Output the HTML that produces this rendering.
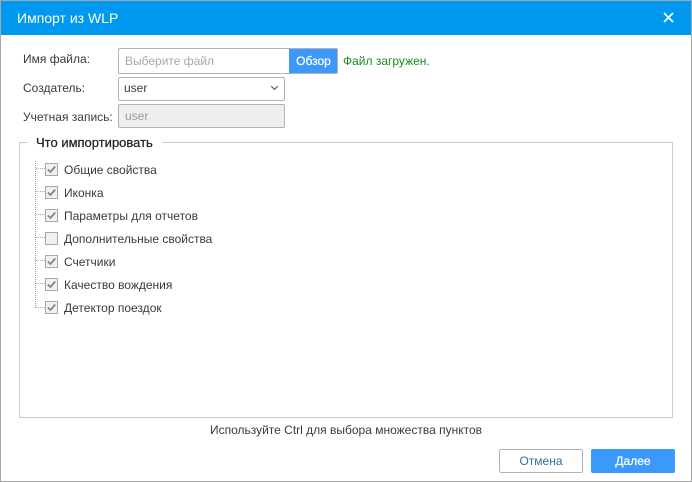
<!DOCTYPE html>
<html><head><meta charset="utf-8">
<style>
html,body{margin:0;padding:0;background:#fff}
body{width:692px;height:482px;position:relative;overflow:hidden;font:12px/14px "Liberation Sans","Noto Sans CJK SC",sans-serif;color:#3a3a3a}
.a{position:absolute;white-space:nowrap}
.box{position:absolute;box-sizing:border-box;border:1px solid #b3b3b3;border-radius:2px;background:#fff}
.cb{position:absolute;left:45px;width:13px;height:13px;box-sizing:border-box;border:1px solid #a8a8a8;background:#f0f0f0}
.cb svg{position:absolute;left:0;top:0}
.lab{left:64px}
.h{position:absolute;left:36px;width:9px;height:0;border-top:1px dotted #aaa}
</style></head>
<body>
<div class="a" style="left:0;top:0;width:692px;height:482px;box-sizing:border-box;border:1px solid #a6a6a6"></div>
<div class="a" style="left:1px;top:1px;width:690px;height:34px;background:#0099ef"></div>
<div class="a" style="left:17px;top:10px;font-size:14px;line-height:17px;color:#fff">Импорт из WLP</div>
<svg class="a" style="left:663px;top:12px" width="11" height="11" viewBox="0 0 11 11"><path d="M1 1L10 10M10 1L1 10" stroke="#fff" stroke-width="1.700" fill="none"/></svg>

<div class="a" style="left:23px;top:52px">Имя файла:</div>
<div class="box" style="left:118px;top:48px;width:172px;height:26px;border-radius:2px 0 0 2px"></div>
<div class="a" style="left:125px;top:54px;color:#a8a8a8">Выберите файл</div>
<div class="a" style="left:289px;top:48px;width:49px;height:26px;box-sizing:border-box;background:#3b99fc;border:1px solid #b3b3b3;border-left:1px solid #3b99fc;border-radius:0 2px 2px 0;color:#fff;text-align:center;line-height:24px;-webkit-text-stroke:.25px #fff">Обзор</div>
<div class="a" style="left:343px;top:54px;color:#1a8a1a">Файл загружен.</div>

<div class="a" style="left:23px;top:81px">Создатель:</div>
<div class="box" style="left:118px;top:77px;width:167px;height:24px"></div>
<div class="a" style="left:124px;top:81px">user</div>
<svg class="a" style="left:270px;top:85px" width="9" height="6" viewBox="0 0 9 6"><path d="M1.200 1.200L4.500 4.300L7.800 1.200" stroke="#666" stroke-width="1.300" fill="none"/></svg>

<div class="a" style="left:23px;top:110px">Учетная запись:</div>
<div class="box" style="left:118px;top:104px;width:167px;height:24px;background:#eee"></div>
<div class="a" style="left:125px;top:109px;color:#999">user</div>

<div class="a" style="left:19px;top:142px;width:654px;height:276px;box-sizing:border-box;border:1px solid #ccc"></div>
<div class="a" style="left:28px;top:135px;padding:0 9px 0 8px;background:#fff;line-height:15px;color:#222;-webkit-text-stroke:.25px #222;font-size:13px">Что импортировать</div>

<div class="a" style="left:35px;top:161px;height:147px;width:0;border-left:1px dotted #999"></div>
<div class="h" style="top:168px"></div><div class="h" style="top:191px"></div><div class="h" style="top:214px"></div><div class="h" style="top:237px"></div><div class="h" style="top:260px"></div><div class="h" style="top:283px"></div><div class="h" style="top:307px"></div>

<div class="cb" style="top:163px"><svg width="11" height="11" viewBox="0 0 11 11"><path d="M1.800 5.500L4.500 8L9.200 2.500" stroke="#858585" stroke-width="1.800" fill="none"/></svg></div>
<div class="a lab" style="top:163px">Общие свойства</div>
<div class="cb" style="top:186px"><svg width="11" height="11" viewBox="0 0 11 11"><path d="M1.800 5.500L4.500 8L9.200 2.500" stroke="#858585" stroke-width="1.800" fill="none"/></svg></div>
<div class="a lab" style="top:186px">Иконка</div>
<div class="cb" style="top:209px"><svg width="11" height="11" viewBox="0 0 11 11"><path d="M1.800 5.500L4.500 8L9.200 2.500" stroke="#858585" stroke-width="1.800" fill="none"/></svg></div>
<div class="a lab" style="top:209px">Параметры для отчетов</div>
<div class="cb" style="top:232px"></div>
<div class="a lab" style="top:232px">Дополнительные свойства</div>
<div class="cb" style="top:255px"><svg width="11" height="11" viewBox="0 0 11 11"><path d="M1.800 5.500L4.500 8L9.200 2.500" stroke="#858585" stroke-width="1.800" fill="none"/></svg></div>
<div class="a lab" style="top:255px">Счетчики</div>
<div class="cb" style="top:278px"><svg width="11" height="11" viewBox="0 0 11 11"><path d="M1.800 5.500L4.500 8L9.200 2.500" stroke="#858585" stroke-width="1.800" fill="none"/></svg></div>
<div class="a lab" style="top:278px">Качество вождения</div>
<div class="cb" style="top:301px"><svg width="11" height="11" viewBox="0 0 11 11"><path d="M1.800 5.500L4.500 8L9.200 2.500" stroke="#858585" stroke-width="1.800" fill="none"/></svg></div>
<div class="a lab" style="top:301px">Детектор поездок</div>

<div class="a" style="left:0;width:692px;top:423px;text-align:center">Используйте Ctrl для выбора множества пунктов</div>

<div class="box" style="left:499px;top:449px;width:84px;height:24px;text-align:center;line-height:22px;color:#2d6f9f">Отмена</div>
<div class="a" style="left:591px;top:449px;width:84px;height:24px;background:#3b99fc;border-radius:2px;text-align:center;line-height:24px;color:#fff;-webkit-text-stroke:.25px #fff">Далее</div>
</body></html>
